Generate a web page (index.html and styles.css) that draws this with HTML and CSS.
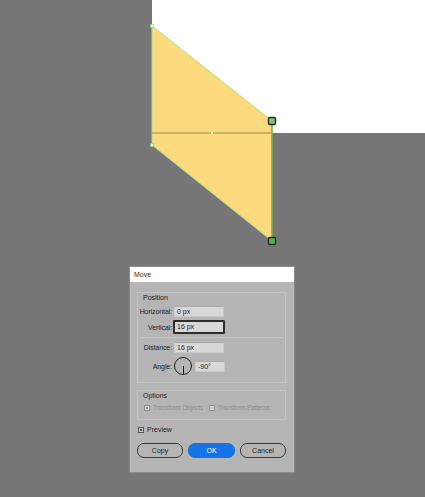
FILE: index.html
```html
<!DOCTYPE html>
<html lang="en">
<head>
    <meta charset="UTF-8">
    <title>Move</title>
    <link rel="stylesheet" href="styles.css">
</head>
<body>
<div class="canvas">
    <svg width="425" height="267" viewBox="0 0 425 267">
        <rect x="152" y="0" width="273" height="133" fill="#ffffff"/>
        <polygon points="152,26 272,121 272,241 152,145" fill="#fdda7e" stroke="#a6df80" stroke-width="1"/>
        <line x1="152" y1="133" x2="272" y2="133" stroke="#9c8b45" stroke-width="1"/>
        <line x1="272" y1="121" x2="272" y2="241" stroke="#6f9a4e" stroke-width="1.2"/>
        <rect x="150.5" y="24.5" width="3" height="3" fill="#e8ffe0" stroke="#8bd06a" stroke-width="0.6"/>
        <rect x="150.5" y="143.5" width="3" height="3" fill="#e8ffe0" stroke="#8bd06a" stroke-width="0.6"/>
        <rect x="211" y="132" width="2" height="2" fill="#e8ffe0"/>
        <rect x="268.5" y="117.5" width="7" height="7" rx="1.2" fill="#7cc57c" stroke="#262626" stroke-width="1.4"/>
        <rect x="268.5" y="237.5" width="7" height="7" rx="1.2" fill="#4fb84f" stroke="#262626" stroke-width="1.4"/>
    </svg>
</div>

<div class="dialog">
    <div class="titlebar">Move</div>
    <div class="dialog-body">
        <div class="group">
            <div class="group-title">Position</div>
            <div class="field-row first">
                <span class="field-label">Horizontal:</span>
                <span class="field-input">0 px</span>
            </div>
            <div class="field-row">
                <span class="field-label">Vertical:</span>
                <span class="field-input focused">16 px</span>
            </div>
            <div class="separator"></div>
            <div class="field-row">
                <span class="field-label">Distance:</span>
                <span class="field-input">16 px</span>
            </div>
            <div class="field-row angle-row">
                <span class="field-label">Angle:</span>
                <span class="dial"><span class="dial-hand"></span></span>
                <span class="field-input short">-90°</span>
            </div>
        </div>

        <div class="group options">
            <div class="group-title">Options</div>
            <div class="check-row disabled">
                <span class="check checked"></span>
                <span class="check-text">Transform Objects</span>
                <span class="check"></span>
                <span class="check-text">Transform Patterns</span>
            </div>
        </div>

        <div class="check-row preview">
            <span class="check checked"></span>
            <span class="check-text">Preview</span>
        </div>

        <div class="buttons">
            <span class="btn">Copy</span>
            <span class="btn primary">OK</span>
            <span class="btn">Cancel</span>
        </div>
    </div>
</div>
</body>
</html>
```

FILE: styles.css
```css
body {
    margin: 0;
    padding: 0;
    background-color: #777777;
    font-family: "Liberation Sans", Arial, sans-serif;
    font-size: 7px;
    color: #222;
    width: 425px;
    height: 497px;
    overflow: hidden;
}

.canvas svg {
    display: block;
}

.dialog {
    margin-left: 130px;
    width: 164px;
    background-color: #b5b5b5;
    box-shadow: 0 0 0 1px #8a8a8a;
}

.titlebar {
    height: 15px;
    line-height: 15px;
    background-color: #fff;
    padding-left: 4px;
    color: #333;
}

.dialog-body {
    padding: 10px 8px 14px 7px;
}

.group {
    border: 1px solid #c3c3c3;
    padding: 0 0 7px 0;
}

.group-title {
    line-height: 8px;
    padding-left: 5px;
    margin-top: 1px;
}

.field-row {
    display: flex;
    align-items: center;
    margin-top: 3px;
    white-space: nowrap;
}

.field-row.first {
    margin-top: 4px;
}

.field-label {
    width: 34px;
    text-align: right;
    margin-right: 2px;
    letter-spacing: -0.1px;
}

.field-input {
    width: 46px;
    height: 9px;
    line-height: 9px;
    padding-left: 2px;
    background-color: #d8d8d8;
    border: 1px solid #c9c9c9;
    border-top-color: #a9a9a9;
}

.field-input.focused {
    width: 46px;
    height: 10px;
    line-height: 10px;
    margin-left: -1px;
    padding-left: 2px;
    border: 2px solid #2e2e2e;
    border-radius: 1px;
}

.field-input.short {
    width: 26px;
}

.separator {
    height: 1px;
    background-color: #c6c6c6;
    margin: 3px 2px 0 2px;
}

.separator + .field-row {
    margin-top: 4px;
}

.angle-row {
    margin-top: 4px;
}

.dial {
    position: relative;
    width: 16px;
    height: 16px;
    border: 1px solid #1e1e1e;
    border-radius: 50%;
    margin-right: 3px;
}

.dial-hand {
    position: absolute;
    left: 8px;
    top: 8px;
    width: 1px;
    height: 8px;
    background-color: #1e1e1e;
}

.options {
    margin-top: 7px;
    padding-bottom: 8px;
}

.check-row {
    display: flex;
    align-items: center;
    white-space: nowrap;
}

.options .check-row {
    margin-top: 4px;
    padding-left: 6px;
}

.check {
    flex-shrink: 0;
    width: 4px;
    height: 4px;
    border: 1px solid #555;
    background-color: #d0d0d0;
    margin-right: 3px;
}

.check.checked {
    background-color: #444;
    box-shadow: inset 0 0 0 1px #d0d0d0;
}

.check-text {
    margin-right: 6px;
}

.disabled {
    color: #8e8e8e;
    font-size: 6.5px;
    letter-spacing: -0.2px;
}

.disabled .check {
    border-color: #919191;
}

.disabled .check.checked {
    background-color: #8e8e8e;
}

.preview {
    margin-top: 6px;
    padding-left: 1px;
}

.buttons {
    display: flex;
    justify-content: space-between;
    margin-top: 10px;
}

.btn {
    width: 44px;
    height: 13px;
    line-height: 13px;
    text-align: center;
    border: 1px solid #3a3a3a;
    border-radius: 7px;
    color: #222;
}

.btn.primary {
    width: 45px;
    border-color: #1473e6;
    background-color: #1473e6;
    color: #fff;
}
```
